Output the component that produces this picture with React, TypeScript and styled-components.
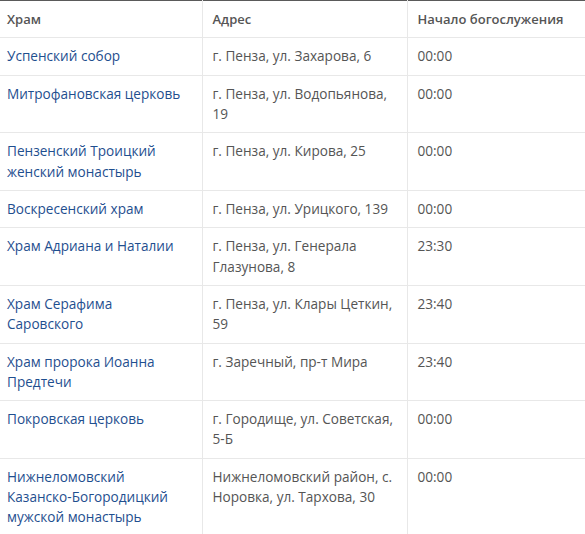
import React from "react";
import styled, { createGlobalStyle } from "styled-components";

const Global = createGlobalStyle`
  html, body { margin: 0; padding: 0; background: #fff; }
  body { font-family: "Open Sans", "Noto Sans", sans-serif; }
`;

const Table = styled.table`
  width: 100%;
  border-collapse: collapse;
  border-top: 1px solid #5a5a5a;
  font-size: 13.6px;
  line-height: 20.2px;
  color: #555;
`;

const Th = styled.th`
  text-align: left;
  font-weight: 600;
  font-size: 13px;
  color: #555;
  padding: 8.1px 10px;
  border-bottom: 1px solid #e8e8e8;
  border-left: 1px solid #e8e8e8;
  vertical-align: top;
  &:first-child { border-left: none; padding-left: 7px; }
`;

const Td = styled.td`
  padding: 8.1px 10px;
  border-bottom: 1px solid #e8e8e8;
  border-left: 1px solid #e8e8e8;
  vertical-align: top;
  &:first-child { border-left: none; padding-left: 7px; }
`;

const Link = styled.a`
  color: #1f4f8f;
  text-decoration: none;
`;

const rows: [string, string, string][] = [
  ["Успенский собор", "г. Пенза, ул. Захарова, 6", "00:00"],
  ["Митрофановская церковь", "г. Пенза, ул. Водопьянова, 19", "00:00"],
  ["Пензенский Троицкий женский монастырь", "г. Пенза, ул. Кирова, 25", "00:00"],
  ["Воскресенский храм", "г. Пенза, ул. Урицкого, 139", "00:00"],
  ["Храм Адриана и Наталии", "г. Пенза, ул. Генерала Глазунова, 8", "23:30"],
  ["Храм Серафима Саровского", "г. Пенза, ул. Клары Цеткин, 59", "23:40"],
  ["Храм пророка Иоанна Предтечи", "г. Заречный, пр-т Мира", "23:40"],
  ["Покровская церковь", "г. Городище, ул. Советская, 5-Б", "00:00"],
  ["Нижнеломовский Казанско-Богородицкий мужской монастырь", "Нижнеломовский район, с. Норовка, ул. Тархова, 30", "00:00"],
];

export default function App() {
  return (
    <>
      <Global />
      <Table>
        <colgroup>
          <col style={{ width: 202 }} />
          <col style={{ width: 205 }} />
          <col />
        </colgroup>
        <thead>
          <tr>
            <Th>Храм</Th>
            <Th>Адрес</Th>
            <Th>Начало богослужения</Th>
          </tr>
        </thead>
        <tbody>
          {rows.map(([n, a, t]) => (
            <tr key={n}>
              <Td><Link href="#">{n}</Link></Td>
              <Td>{a}</Td>
              <Td>{t}</Td>
            </tr>
          ))}
        </tbody>
      </Table>
    </>
  );
}
